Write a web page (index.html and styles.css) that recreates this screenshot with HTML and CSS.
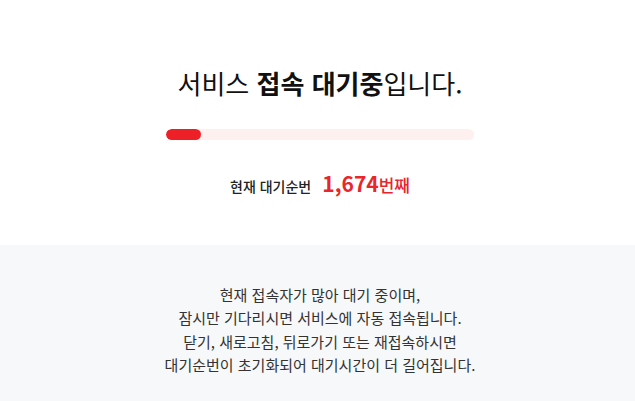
FILE: index.html
```html
<!DOCTYPE html>
<html lang="ko">
<head>
<meta charset="utf-8">
<link rel="stylesheet" href="styles.css">
</head>
<body>
<div class="top">
  <h1 class="title">서비스 <strong>접속 대기중</strong>입니다.</h1>
  <div class="bar"><div class="fill" style="width:11.5%"></div></div>
  <div class="queue"><span class="label">현재 대기순번</span><span class="num">1,674</span><span class="unit">번째</span></div>
</div>
<div class="bottom">
  <p>현재 접속자가 많아 대기 중이며,<br>잠시만 기다리시면 서비스에 자동 접속됩니다.</p>
  <p>닫기, 새로고침, 뒤로가기 또는 재접속하시면<br>대기순번이 초기화되어 대기시간이 더 길어집니다.</p>
</div>
</body>
</html>
```
FILE: styles.css
```css
html, body { margin: 0; padding: 0; }
body {
  font-family: "Noto Sans CJK KR", "Noto Sans", sans-serif;
  color: #222;
  background: #fff;
}
.top {
  height: 245px;
  display: flex;
  flex-direction: column;
  align-items: center;
  box-sizing: border-box;
  padding: 64px 0 0 5px;
}
.title {
  margin: 0;
  font-size: 26px;
  font-weight: 400;
  line-height: 38px;
  color: #111;
}
.title strong { font-weight: 700; }
.bar {
  margin-top: 27px;
  width: 308px;
  height: 11px;
  border-radius: 6px;
  background: #fff0f0;
  overflow: hidden;
}
.fill {
  height: 100%;
  background: #ee2027;
  border-radius: 6px;
}
.queue {
  margin-top: 28px;
  display: flex;
  align-items: baseline;
}
.label { font-size: 14px; font-weight: 500; color: #222; margin-right: 11px; }
.num { font-size: 21px; font-weight: 700; color: #e8262b; }
.unit { font-size: 17px; font-weight: 500; color: #e8262b; }
.bottom {
  background: #f7f8fa;
  height: 156px;
  box-sizing: border-box;
  padding: 38px 0 0 5px;
  text-align: center;
  font-size: 15px;
  color: #333;
}
.bottom p { margin: 0 0 1px; line-height: 23px; }
```
